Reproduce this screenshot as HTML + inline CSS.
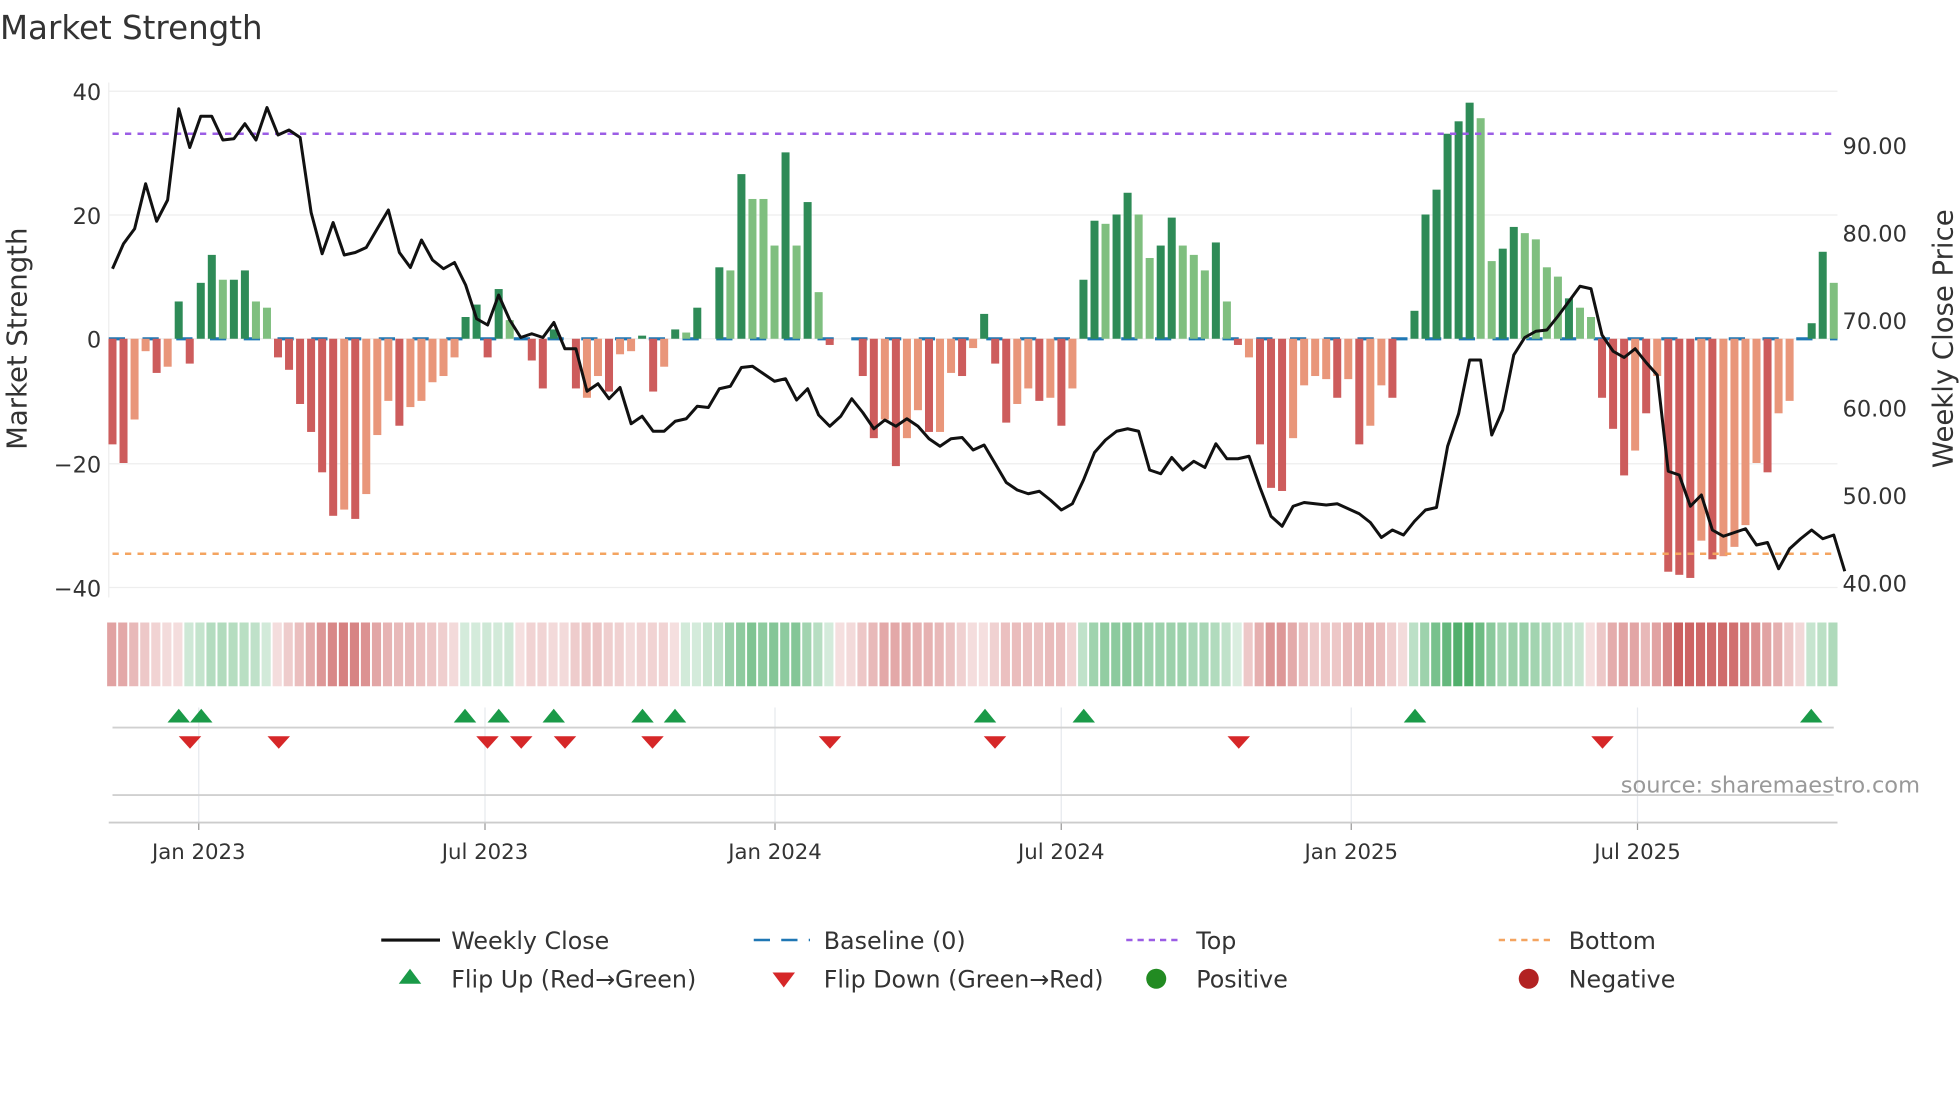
<!DOCTYPE html>
<html><head><meta charset="utf-8">
<style>
html,body{margin:0;padding:0;background:#fff;width:1960px;height:1102px;overflow:hidden}
svg{display:block}
text{font-family:"DejaVu Sans","Liberation Sans",sans-serif;fill:#333}
</style></head>
<body>
<svg id="c" width="1960" height="1102" viewBox="0 0 1568 881.6" xmlns="http://www.w3.org/2000/svg">
<text x="0" y="31" font-size="26">Market Strength</text>
</svg>
<script>
var NS="http://www.w3.org/2000/svg",svg=document.getElementById('c');
function el(t,a,txt){var e=document.createElementNS(NS,t);for(var k in a)e.setAttribute(k,a[k]);if(txt!=null)e.textContent=txt;svg.appendChild(e);return e;}
var B=[[-17,1],[-20,1],[-13,0],[-2,0],[-5.5,1],[-4.5,0],[6,1],[-4,1],[9,1],[13.5,1],[9.5,0],[9.5,1],[11,1],[6,0],[5,0],[-3,1],[-5,1],[-10.5,1],[-15,1],[-21.5,1],[-28.5,1],[-27.5,0],[-29,1],[-25,0],[-15.5,0],[-10,0],[-14,1],[-11,0],[-10,0],[-7,0],[-6,0],[-3,0],[3.5,1],[5.5,1],[-3,1],[8,1],[3,0],[0,0],[-3.5,1],[-8,1],[1.5,1],[0,0],[-8,1],[-9.5,0],[-6,0],[-8.5,1],[-2.5,0],[-2,0],[0.5,1],[-8.5,1],[-4.5,0],[1.5,1],[1,0],[5,1],[0,0],[11.5,1],[11,0],[26.5,1],[22.5,0],[22.5,0],[15,0],[30,1],[15,0],[22,1],[7.5,0],[-1,1],[0,0],[0,0],[-6,1],[-16,1],[-13,0],[-20.5,1],[-16,0],[-11.5,0],[-15,1],[-15,0],[-5.5,0],[-6,1],[-1.5,0],[4,1],[-4,1],[-13.5,1],[-10.5,0],[-8,0],[-10,1],[-9.5,0],[-14,1],[-8,0],[9.5,1],[19,1],[18.5,0],[20,1],[23.5,1],[20,0],[13,0],[15,1],[19.5,1],[15,0],[13.5,0],[11,0],[15.5,1],[6,0],[-1,1],[-3,0],[-17,1],[-24,1],[-24.5,1],[-16,0],[-7.5,0],[-6,0],[-6.5,0],[-9.5,1],[-6.5,0],[-17,1],[-14,0],[-7.5,0],[-9.5,1],[0,0],[4.5,1],[20,1],[24,1],[33,1],[35,1],[38,1],[35.5,0],[12.5,0],[14.5,1],[18,1],[17,0],[16,0],[11.5,0],[10,0],[6.5,1],[5,0],[3.5,0],[-9.5,1],[-14.5,1],[-22,1],[-18,0],[-12,1],[-6,0],[-37.5,1],[-38,1],[-38.5,1],[-32.5,0],[-35.5,1],[-35,0],[-33.5,0],[-30,0],[-20,0],[-21.5,1],[-12,0],[-10,0],[0,0],[2.5,1],[14,1],[9,0]];
var P=[215,195,183,147,177,160,87,118,93,93,112,111,99,112,86,108,104,110,170,203,178,204,202,198,183,168,202,214,192,208,215,210,228,255,260,236,256,270,267,270,258,
279,279,313,307,319,310,339,333,345,345,337,335,325,326,311,309,294,293,299,305,303,320,311,332,341,333,319,330,343,336,341,335,341,
351,357,351,350,360,356,371,386,392,395,393,400,408,403,384,362,352,345,343,345,376,379,366,376,369,374,355,367,367,365,390,413,421,405,402,403,404,403,407,411,418,430,424,428,417,408,406,357,331,288,288,348,328,284,270,265,264,253,241,229,231,268,281,286,279,290,300,377,380,405,396,424,429,426,423,436,434,455,439,431,424,431,428,457];
var X0=90,DX=(1467-90)/(B.length-1),Y0=271,SC=4.97;
[73,172,271,371,470].forEach(function(y){el('line',{x1:87,x2:1470,y1:y,y2:y,stroke:'#eeeeee','stroke-width':1});});
el('line',{x1:87,x2:87,y1:66,y2:478,stroke:'#eee'});
[159,388,620,849,1081,1310].forEach(function(x){el('line',{x1:x,x2:x,y1:566,y2:658,stroke:'#e6e9ee','stroke-width':1});el('line',{x1:x,x2:x,y1:658,y2:664,stroke:'#999'});});
[[40,73],[20,172],[0,271],[-20,371],[-40,470]].forEach(function(t){el('text',{x:81,y:t[1]+7,'font-size':18,'text-anchor':'end'},t[0]<0?'\u2212'+(-t[0]):t[0]);});
[[90,116],[80,186],[70,256],[60,326],[50,396],[40,466]].forEach(function(t){el('text',{x:1474,y:t[1]+7,'font-size':18},t[0].toFixed(2));});
el('text',{x:0,y:0,'font-size':22,'text-anchor':'middle',transform:'translate(21,271) rotate(-90)'},'Market Strength');
el('text',{x:0,y:0,'font-size':22,'text-anchor':'middle',transform:'translate(1562,271) rotate(-90)'},'Weekly Close Price');
el('line',{x1:87,x2:1470,y1:271,y2:271,stroke:'#1f77b4','stroke-width':2.5,'stroke-dasharray':'13 14'});
B.forEach(function(b,i){var v=b[0];if(v===0)return;var x=X0+i*DX-3.2,h=Math.abs(v)*SC;var c=v>0?(b[1]?'#2e8b57':'#7fbf7f'):(b[1]?'#cd5c5c':'#e9967a');el('rect',{x:x,y:v>0?Y0-h:Y0,width:6.4,height:h,fill:c});});
el('line',{x1:90,x2:1467,y1:107,y2:107,stroke:'#9b5de5','stroke-width':2,'stroke-dasharray':'5 5'});
el('line',{x1:90,x2:1467,y1:443,y2:443,stroke:'#f4a460','stroke-width':2,'stroke-dasharray':'5 5'});
el('polyline',{points:P.map(function(y,i){return (X0+i*DX).toFixed(1)+','+y;}).join(' '),fill:'none',stroke:'#111','stroke-width':2.4,'stroke-linejoin':'round'});
var sm=B.map(function(b,i){var s=0,n=0;for(var j=i-1;j<=i+1;j++){if(B[j]){s+=B[j][0];n++;}}return s/n;});
B.forEach(function(b,i){var v=sm[i],a=Math.min(1,0.18+Math.abs(v)/40*0.8);var c=v>=0?'rgba(60,165,90,'+a.toFixed(2)+')':'rgba(200,85,85,'+a.toFixed(2)+')';el('rect',{x:X0+i*DX-4.3,y:498,width:7.3,height:51,fill:c});});
el('line',{x1:90,x2:1467,y1:582,y2:582,stroke:'#d0d0d0','stroke-width':1.5});
el('line',{x1:90,x2:1467,y1:636,y2:636,stroke:'#d0d0d0','stroke-width':1.5});
el('line',{x1:87,x2:1470,y1:658,y2:658,stroke:'#ccc','stroke-width':1.5});
[143,161,372,399,443,514,540,788,867,1132,1449].forEach(function(x){el('polygon',{points:(x-9)+',578 '+(x+9)+',578 '+x+',567',fill:'#1a9a48'});});
[152,223,390,417,452,522,664,796,991,1282].forEach(function(x){el('polygon',{points:(x-9)+',589 '+(x+9)+',589 '+x+',599',fill:'#d62728'});});
el('text',{x:1536,y:634,'font-size':18,'text-anchor':'end',style:'fill:#999'},'source: sharemaestro.com');
[['Jan 2023',159],['Jul 2023',388],['Jan 2024',620],['Jul 2024',849],['Jan 2025',1081],['Jul 2025',1310]].forEach(function(t){el('text',{x:t[1],y:687,'font-size':17,'text-anchor':'middle'},t[0]);});
var ly1=752,ly2=783;
el('line',{x1:305,x2:352,y1:ly1,y2:ly1,stroke:'#111','stroke-width':2.5});
el('text',{x:361,y:ly1+7,'font-size':19},'Weekly Close');
el('line',{x1:603,x2:648,y1:ly1,y2:ly1,stroke:'#1f77b4','stroke-width':2,'stroke-dasharray':'13 9'});
el('text',{x:659,y:ly1+7,'font-size':19},'Baseline (0)');
el('line',{x1:901,x2:946,y1:ly1,y2:ly1,stroke:'#9b5de5','stroke-width':2,'stroke-dasharray':'5 4'});
el('text',{x:957,y:ly1+7,'font-size':19},'Top');
el('line',{x1:1199,x2:1244,y1:ly1,y2:ly1,stroke:'#f4a460','stroke-width':2,'stroke-dasharray':'5 4'});
el('text',{x:1255,y:ly1+7,'font-size':19},'Bottom');
el('polygon',{points:'319,787 337,787 328,775',fill:'#1a9a48'});
el('text',{x:361,y:ly2+7,'font-size':19},'Flip Up (Red\u2192Green)');
el('polygon',{points:'618,778 636,778 627,790',fill:'#d62728'});
el('text',{x:659,y:ly2+7,'font-size':19},'Flip Down (Green\u2192Red)');
el('circle',{cx:925,cy:ly2,r:8,fill:'#228b22'});
el('text',{x:957,y:ly2+7,'font-size':19},'Positive');
el('circle',{cx:1223,cy:ly2,r:8,fill:'#b22222'});
el('text',{x:1255,y:ly2+7,'font-size':19},'Negative');
</script>
</body></html>
